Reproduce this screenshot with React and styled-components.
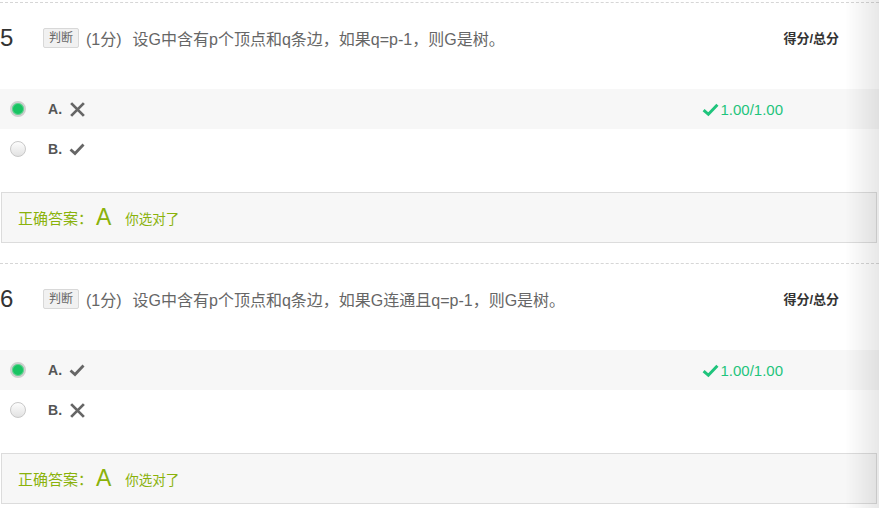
import React from 'react';
import styled, { createGlobalStyle } from 'styled-components';

const GlobalStyle = createGlobalStyle`
  html, body {
    margin: 0;
    padding: 0;
    background: #fff;
  }
  body {
    font-family: "Liberation Sans", "Noto Sans CJK SC", sans-serif;
    color: #666;
  }
`;

const questions = [
  {
    num: 5,
    title: '设G中含有p个顶点和q条边，如果q=p-1，则G是树。',
    options: [
      { key: 'A', mark: 'cross', picked: true },
      { key: 'B', mark: 'check', picked: false },
    ],
    answer: 'A',
  },
  {
    num: 6,
    title: '设G中含有p个顶点和q条边，如果G连通且q=p-1，则G是树。',
    options: [
      { key: 'A', mark: 'check', picked: true },
      { key: 'B', mark: 'cross', picked: false },
    ],
    answer: 'A',
  },
];

function Cross() {
  return (
    <svg width="17" height="17" viewBox="0 0 16 16">
      <path d="M2 2 L14 14 M14 2 L2 14" stroke="#666" strokeWidth="2.6" fill="none" />
    </svg>
  );
}

function Check({ color = '#666', size = 16 }) {
  return (
    <svg width={size} height={size} viewBox="0 0 16 16">
      <path d="M1.5 8.5 L6 12.5 L14.5 3.5" stroke={color} strokeWidth="2.8" fill="none" />
    </svg>
  );
}

function App() {
  return (
    <Page>
      <GlobalStyle />
      {questions.map((q) => (
        <Question key={q.num}>
          <Header>
            <Num>{q.num}</Num>
            <Tag>判断</Tag>
            <Point>(1分)</Point>
            <Title>{q.title}</Title>
            <ScoreHead>得分/总分</ScoreHead>
          </Header>
          {q.options.map((o) => (
            <OptionRow key={o.key} $picked={o.picked}>
              <Radio $picked={o.picked} />
              <Letter>{o.key}.</Letter>
              {o.mark === 'cross' ? <Cross /> : <Check />}
              {o.picked && (
                <Score>
                  <Check color="#1fc47c" size={17} />
                  1.00/1.00
                </Score>
              )}
            </OptionRow>
          ))}
          <AnswerBox>
            正确答案：<Big>{q.answer}</Big>
            <Right>你选对了</Right>
          </AnswerBox>
        </Question>
      ))}
      <EdgeShade />
    </Page>
  );
}

const Page = styled.div`
  padding-top: 2px;
  width: 879px;
`;

const Question = styled.div`
  border-top: 1px dashed #d6d6d6;
  padding-bottom: 20px;
`;

const Header = styled.div`
  display: flex;
  align-items: center;
  height: 69px;
  margin-bottom: 17px;
`;

const Num = styled.span`
  font-size: 24px;
  color: #333;
  width: 43px;
  flex-shrink: 0;
`;

const Tag = styled.span`
  font-size: 12px;
  color: #666;
  background: #f1f1f1;
  border: 1px solid #d8d8d8;
  border-radius: 2px;
  height: 18px;
  line-height: 18px;
  padding: 0 5px;
`;

const Point = styled.span`
  font-size: 16px;
  color: #666;
  margin-left: 7px;
`;

const Title = styled.span`
  font-size: 16px;
  color: #666;
  margin-left: 11px;
  flex: 1;
`;

const ScoreHead = styled.span`
  font-size: 13px;
  font-weight: bold;
  color: #333;
  margin-right: 40px;
`;

const OptionRow = styled.div`
  display: flex;
  align-items: center;
  height: 40px;
  background: ${(p) => (p.$picked ? '#f7f7f7' : 'transparent')};
`;

const Radio = styled.span`
  width: 16px;
  height: 16px;
  box-sizing: border-box;
  border-radius: 50%;
  margin-left: 10px;
  margin-right: 22px;
  ${(p) =>
    p.$picked
      ? `background: #19c463; border: 2px solid #cfcfcf; box-shadow: inset 0 0 0 1px #5fd38f;`
      : `background: linear-gradient(#fdfdfd, #e2e2e2); border: 1px solid #c8c8c8;`}
`;

const Letter = styled.span`
  font-size: 14px;
  font-weight: bold;
  color: #555;
  margin-right: 7px;
`;

const Score = styled.span`
  margin-left: auto;
  margin-right: 96px;
  display: flex;
  align-items: center;
  gap: 1px;
  font-size: 15px;
  color: #1fc47c;
`;

const AnswerBox = styled.div`
  margin: 23px 2px 0 1px;
  height: 49px;
  border: 1px solid #dcdcdc;
  background: #f7f7f7;
  display: flex;
  align-items: center;
  padding-left: 16px;
  font-size: 15px;
  color: #8ab20b;
`;

const Big = styled.span`
  font-size: 23px;
  margin-left: 3px;
`;

const Right = styled.span`
  font-size: 13.5px;
  margin-left: 14px;
`;

const EdgeShade = styled.div`
  position: fixed;
  top: 0;
  right: 0;
  bottom: 0;
  width: 34px;
  pointer-events: none;
  background: linear-gradient(to right, rgba(0, 0, 0, 0), rgba(0, 0, 0, 0.09));
`;

export default App;
